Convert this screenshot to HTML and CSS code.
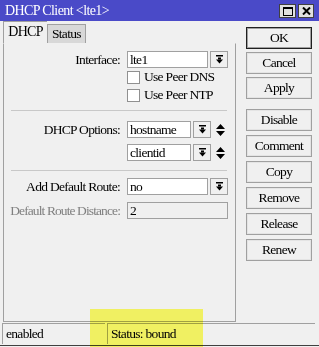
FILE: index.html
```html
<!DOCTYPE html>
<html lang="en">
<head>
    <meta charset="UTF-8">
    <title>DHCP Client</title>
    <link rel="stylesheet" href="styles.css">
</head>
<body>
    <div class="window">
        <div class="titlebar">
            <span class="title">DHCP Client &lt;lte1&gt;</span>
            <div class="winbtns">
                <span class="winbtn max"><svg width="10" height="9" viewBox="0 0 10 9"><rect x="0.5" y="0.5" width="9" height="8" fill="none" stroke="#000"/><rect x="0" y="0" width="10" height="2" fill="#000"/></svg></span>
                <span class="winbtn close"><svg width="9" height="8" viewBox="0 0 9 8"><path d="M1 0.5L8 7.5M8 0.5L1 7.5" stroke="#000" stroke-width="2"/></svg></span>
            </div>
        </div>

        <div class="main">
            <div class="left">
                <div class="tabs">
                    <div class="tab active">DHCP</div>
                    <div class="tab">Status</div>
                </div>
                <div class="panel">
                    <div class="row">
                        <span class="label">Interface:</span>
                        <span class="input wide">lte1</span>
                        <span class="drop"><svg width="7" height="9" viewBox="0 0 7 9"><rect x="0" y="0" width="7" height="1.5"/><rect x="2" y="2.5" width="3" height="2"/><path d="M0 4.5h7L3.5 8.5z"/></svg></span>
                    </div>
                    <div class="check">
                        <span class="box"></span>
                        <span>Use Peer DNS</span>
                    </div>
                    <div class="check">
                        <span class="box"></span>
                        <span>Use Peer NTP</span>
                    </div>

                    <div class="sep"></div>

                    <div class="row">
                        <span class="label">DHCP Options:</span>
                        <span class="input short">hostname</span>
                        <span class="drop"><svg width="7" height="9" viewBox="0 0 7 9"><rect x="0" y="0" width="7" height="1.5"/><rect x="2" y="2.5" width="3" height="2"/><path d="M0 4.5h7L3.5 8.5z"/></svg></span>
                        <span class="updown"><svg width="9" height="12" viewBox="0 0 9 12"><path d="M0 5h9L4.5 0z M0 7h9L4.5 12z"/></svg></span>
                    </div>
                    <div class="row second">
                        <span class="label"></span>
                        <span class="input short">clientid</span>
                        <span class="drop"><svg width="7" height="9" viewBox="0 0 7 9"><rect x="0" y="0" width="7" height="1.5"/><rect x="2" y="2.5" width="3" height="2"/><path d="M0 4.5h7L3.5 8.5z"/></svg></span>
                        <span class="updown"><svg width="9" height="12" viewBox="0 0 9 12"><path d="M0 5h9L4.5 0z M0 7h9L4.5 12z"/></svg></span>
                    </div>

                    <div class="sep sep2"></div>

                    <div class="row">
                        <span class="label">Add Default Route:</span>
                        <span class="input wide">no</span>
                        <span class="drop"><svg width="7" height="9" viewBox="0 0 7 9"><rect x="0" y="0" width="7" height="1.5"/><rect x="2" y="2.5" width="3" height="2"/><path d="M0 4.5h7L3.5 8.5z"/></svg></span>
                    </div>
                    <div class="row distance">
                        <span class="label disabled">Default Route Distance:</span>
                        <span class="input full off">2</span>
                    </div>
                </div>
            </div>

            <div class="actions">
                <button class="btn ok">OK</button>
                <button class="btn">Cancel</button>
                <button class="btn">Apply</button>
                <button class="btn group">Disable</button>
                <button class="btn">Comment</button>
                <button class="btn">Copy</button>
                <button class="btn">Remove</button>
                <button class="btn">Release</button>
                <button class="btn">Renew</button>
            </div>
        </div>

        <div class="statusbar">
            <div class="field f1">enabled</div>
            <div class="field f2">Status: bound</div>
        </div>
        <div class="frame-bottom"></div>

        <div class="highlight"></div>
    </div>
</body>
</html>
```

FILE: styles.css
```css
body
{
    margin: 0;
    background: #ffffff;
    font-family: "Liberation Serif", serif;
    font-size: 13.5px;
    letter-spacing: -0.7px;
    color: #000;
}

.window
{
    position: relative;
    width: 319px;
    height: 347px;
    background: #f0f0f0;
    display: flex;
    flex-direction: column;
    overflow: hidden;
}

/* title bar */
.titlebar
{
    height: 21px;
    flex: none;
    background: #4a4ac8;
    color: #fff;
    display: flex;
    align-items: center;
    justify-content: space-between;
    padding: 0 5px 0 5px;
}
.title
{
    font-size: 14px;
    letter-spacing: -0.6px;
}
.winbtns
{
    display: flex;
    gap: 2px;
    margin-top: 1px;
}
.winbtn
{
    width: 14px;
    height: 12px;
    background: #e0e0e0;
    border: 1px solid #404040;
    display: flex;
    align-items: center;
    justify-content: center;
}
.winbtn.max
{
    width: 15px;
}

/* main area */
.main
{
    height: 301px;
    flex: none;
    display: flex;
}
.left
{
    width: 233px;
    padding-left: 3px;
    display: flex;
    flex-direction: column;
}
.tabs
{
    height: 22px;
    flex: none;
    display: flex;
    align-items: flex-end;
}
.tab
{
    height: 18px;
    padding: 0 4px;
    background: #d8d8d8;
    border: 1px solid #a0a0a0;
    border-bottom: none;
    line-height: 18px;
}
.tab.active
{
    height: 21px;
    width: 35px;
    padding: 0 4px;
    background: #f0f0f0;
    border-right: none;
    line-height: 19px;
    font-size: 14px;
    text-align: center;
}

.panel
{
    box-sizing: border-box;
    height: 279px;
    flex: none;
    border: 1px solid #a0a0a0;
    border-top: 1px solid #f0f0f0;
    padding-top: 7px;
}

.row
{
    height: 17px;
    display: flex;
    align-items: center;
}
.row.second
{
    margin-top: 6px;
}
.row.distance
{
    margin-top: 7px;
}
.label
{
    width: 116px;
    margin-right: 7px;
    text-align: right;
    white-space: nowrap;
}
.label.disabled
{
    color: #808080;
    letter-spacing: -0.9px;
}
.input
{
    height: 15px;
    line-height: 15px;
    padding-left: 2px;
    background: #fff;
    border: 1px solid #a0a0a0;
    box-sizing: content-box;
    overflow: hidden;
}
.input.wide
{
    width: 77px;
}
.input.short
{
    width: 60px;
}
.input.full
{
    width: 97px;
}
.input.off
{
    background: #f0f0f0;
}
.drop
{
    width: 16px;
    height: 15px;
    margin-left: 2px;
    border: 1px solid #a0a0a0;
    background: #f0f0f0;
    display: flex;
    align-items: center;
    justify-content: center;
}
.updown
{
    margin-left: 5px;
    display: flex;
    align-items: center;
}

.check
{
    height: 18px;
    display: flex;
    align-items: center;
    padding-left: 123px;
}
.check:first-of-type
{
    margin-top: 6px;
}
.box
{
    width: 11px;
    height: 11px;
    margin-right: 4px;
    background: #fff;
    border: 1px solid #909090;
}

.sep
{
    height: 1px;
    width: 216px;
    margin: 6px 0 10px 7px;
    background: #c8c8c8;
}
.sep.sep2
{
    margin: 9px 0 7px 7px;
}

/* right buttons */
.actions
{
    margin-left: 10px;
    padding-top: 6px;
    display: flex;
    flex-direction: column;
}
.btn
{
    width: 66px;
    height: 22px;
    margin-bottom: 3px;
    padding: 0;
    font-family: "Liberation Serif", serif;
    font-size: 13.5px;
    letter-spacing: -0.7px;
    color: #000;
    background: #f0f0f0;
    border: 1px solid #a0a0a0;
    box-shadow: inset 0 0 0 1px #e4e4e4;
}
.btn.ok
{
    border: 1px solid #202020;
    box-shadow: inset 0 0 0 1px #a0a0a0;
}
.btn.group
{
    margin-top: 7px;
    margin-bottom: 4px;
}
.btn.group ~ .btn
{
    margin-bottom: 4px;
}

/* status bar */
.statusbar
{
    height: 21px;
    flex: none;
    margin-top: 1px;
    display: flex;
    gap: 2px;
    padding-left: 2px;
}
.field
{
    height: 20px;
    line-height: 20px;
    padding-left: 3px;
    border-top: 1px solid #a0a0a0;
    border-left: 1px solid #a0a0a0;
    white-space: nowrap;
}
.f1
{
    width: 99px;
}
.f2
{
    width: 204px;
}
.frame-bottom
{
    height: 1px;
    margin-top: 1px;
    border-top: 1px solid #404040;
}

.highlight
{
    position: absolute;
    left: 90px;
    top: 309px;
    width: 113px;
    height: 38px;
    background: rgb(255, 255, 104);
    mix-blend-mode: multiply;
}
```
